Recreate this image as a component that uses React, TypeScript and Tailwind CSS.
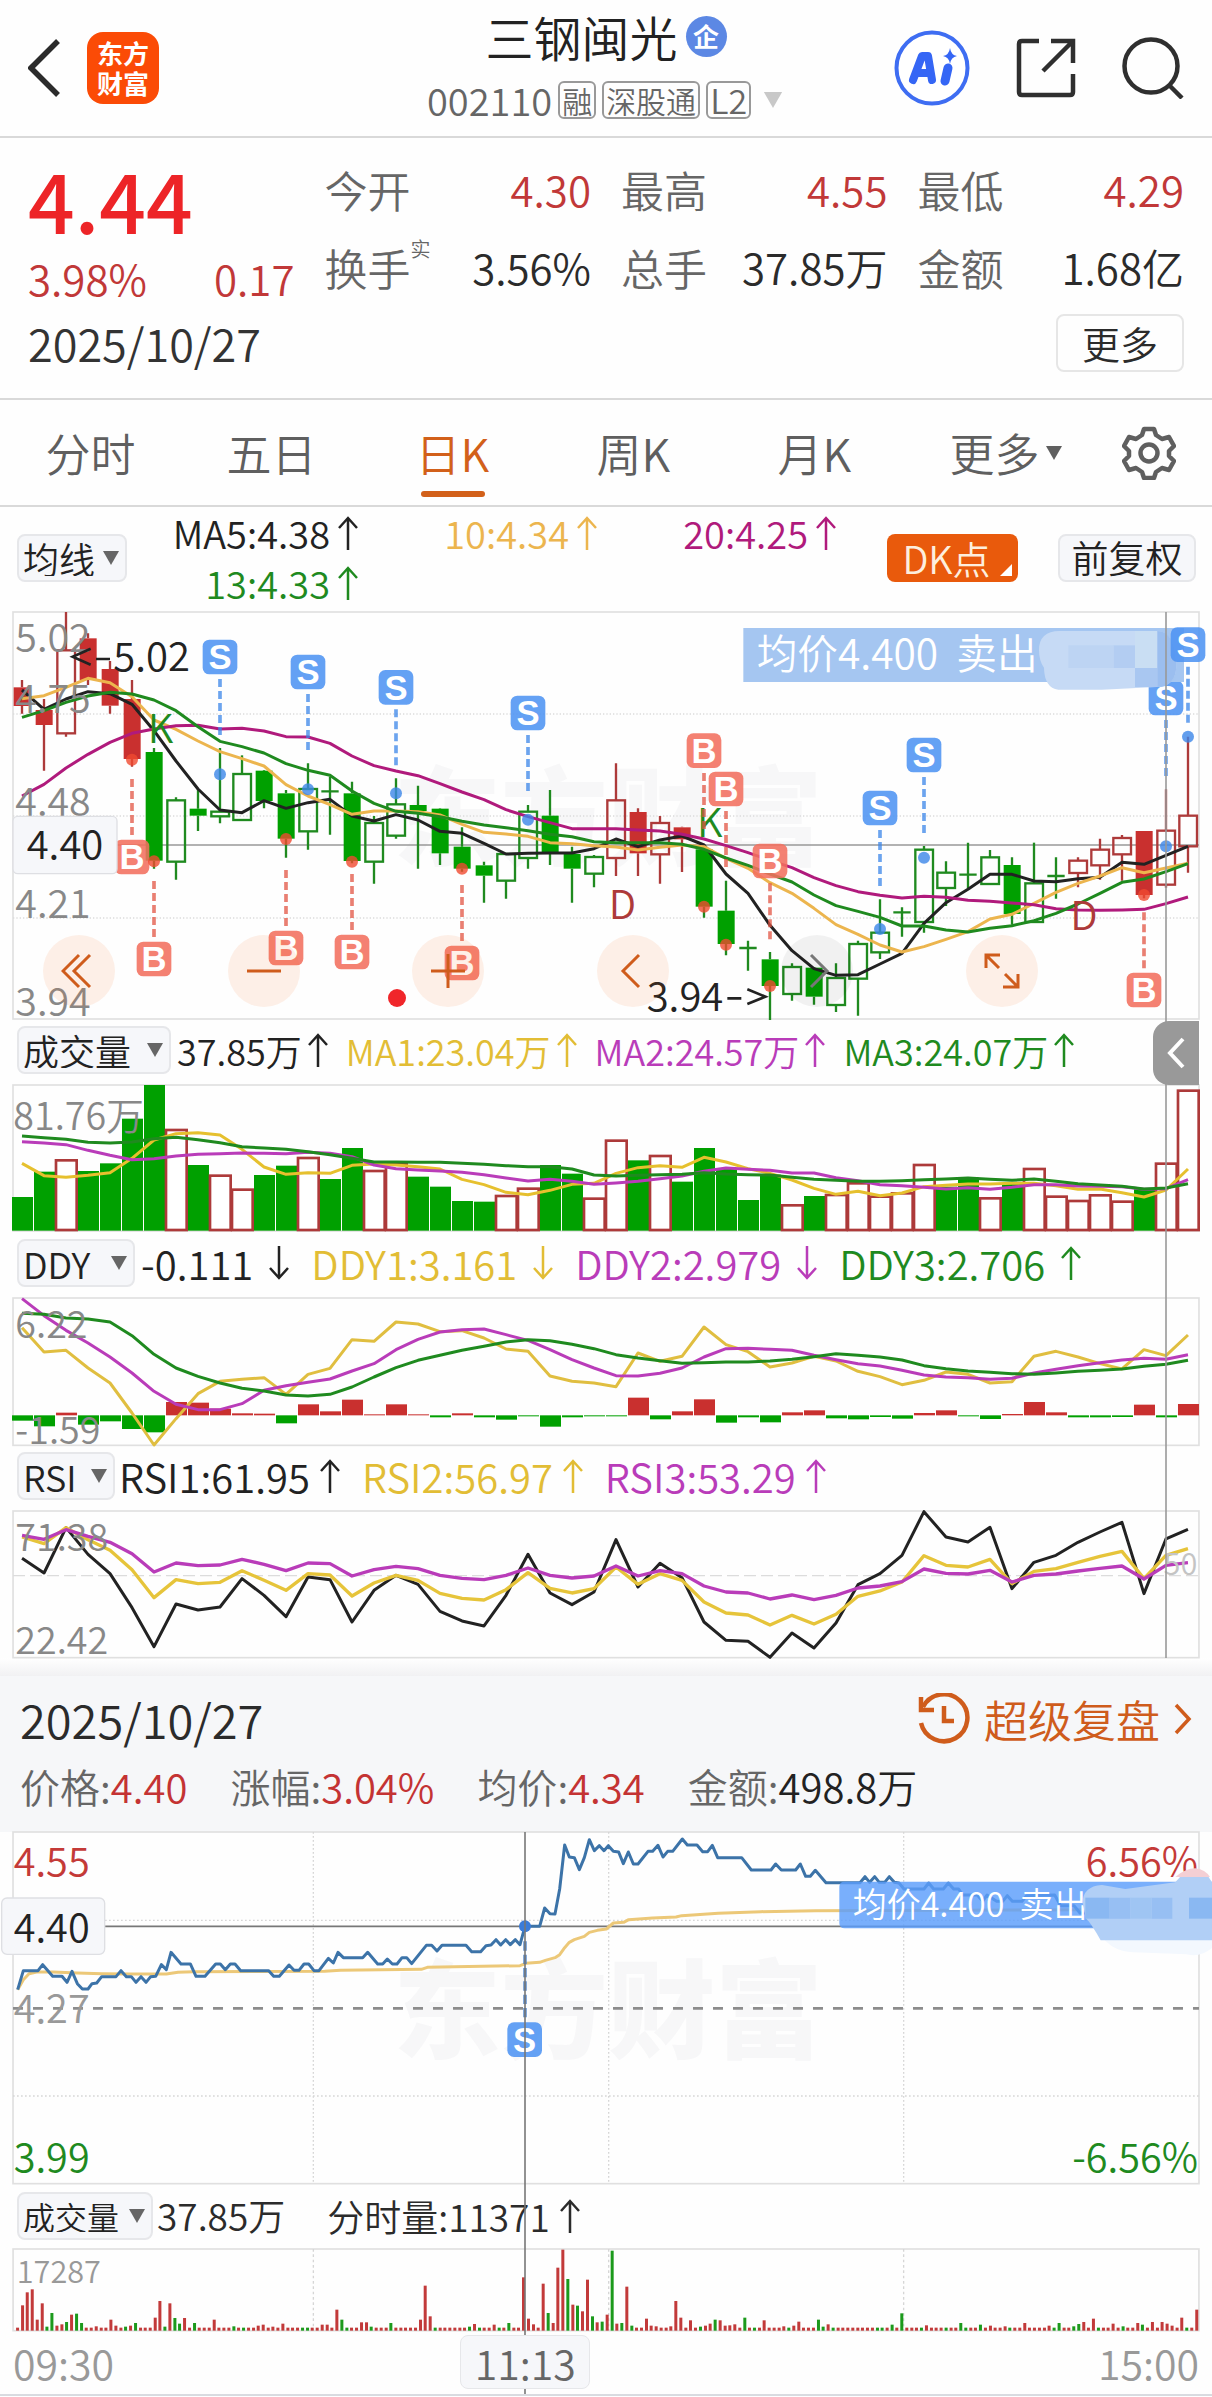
import React from "react";

const UP = "#c9302f";
const DOWN = "#00a000";
const UP_LINE = "#ad3a3a";
const DOWN_LINE = "#1f8a1f";

/* Chart drawings use three units per CSS pixel; one trading day is 66 units wide. */
const dayX = (i: number) => 66 * (i + 1);
const dayLine = (ys: number[]) => ys.map((y, i) => `${dayX(i)},${y}`).join(" ");

type Candle = [string, number, number, number, number];

/* kind (upper case: filled, lower case: hollow, x: cross), high, body top, body bottom, low */
const candles: Candle[] = [
  ["R", 240, 262, 318, 341], ["R", 297, 330, 375, 512], ["r", 36, 151, 400, 410], ["R", 100, 115, 240, 255],
  ["R", 183, 207, 317, 341], ["R", 240, 297, 477, 500], ["G", 444, 456, 782, 806], ["g", 592, 601, 785, 839],
  ["G", 568, 626, 647, 693], ["g", 444, 635, 649, 670], ["g", 466, 522, 660, 660], ["G", 510, 512, 603, 625],
  ["G", 570, 580, 716, 773], ["g", 490, 567, 694, 749], ["x", 530, 574, 574, 704], ["G", 545, 580, 783, 790],
  ["g", 648, 669, 785, 851], ["g", 535, 613, 707, 716], ["G", 557, 615, 633, 806], ["G", 625, 626, 760, 795],
  ["G", 682, 740, 806, 815], ["G", 785, 796, 827, 908], ["g", 760, 762, 842, 896], ["g", 615, 635, 774, 806],
  ["G", 570, 647, 760, 795], ["G", 740, 762, 806, 908], ["g", 765, 771, 821, 862], ["r", 490, 601, 774, 828],
  ["R", 625, 636, 760, 828], ["r", 648, 669, 763, 851], ["R", 680, 682, 718, 816], ["G", 740, 748, 920, 953],
  ["G", 842, 932, 1032, 1066], ["x", 1022, 1044, 1044, 1112], ["G", 1056, 1078, 1158, 1260], ["g", 1090, 1101, 1182, 1202],
  ["G", 1101, 1103, 1190, 1214], ["g", 1090, 1134, 1215, 1236], ["g", 1022, 1032, 1136, 1247], ["g", 898, 998, 1057, 1077],
  ["x", 922, 937, 937, 1010], ["g", 738, 749, 966, 998], ["g", 784, 818, 864, 918], ["x", 728, 824, 824, 866],
  ["g", 750, 772, 852, 852], ["G", 772, 795, 942, 974], ["g", 728, 850, 966, 966], ["x", 772, 828, 828, 896],
  ["r", 772, 782, 819, 862], ["r", 716, 749, 796, 839], ["r", 705, 714, 763, 842], ["R", 693, 693, 885, 895],
  ["r", 568, 692, 854, 863], ["r", 410, 647, 739, 818],
];

const ma5 = [270, 328, 297, 275, 281, 313, 392, 483, 567, 630, 638, 602, 625, 608, 598, 648, 663, 644, 660, 694, 700, 730, 762, 760, 759, 759, 746, 717, 740, 720, 708, 735, 822, 880, 976, 1052, 1106, 1126, 1124, 1092, 1060, 970, 908, 868, 823, 823, 843, 845, 836, 832, 787, 793, 766, 739];
const ma10 = [296, 287, 262, 235, 248, 290, 360, 388, 423, 455, 476, 498, 554, 588, 614, 643, 633, 633, 635, 645, 673, 697, 702, 709, 728, 731, 737, 741, 750, 742, 735, 740, 775, 805, 848, 880, 925, 974, 1003, 1035, 1056, 1040, 1018, 995, 957, 943, 910, 877, 850, 828, 803, 818, 804, 790];
const ma13 = [352, 332, 307, 288, 277, 282, 300, 332, 380, 424, 440, 459, 491, 511, 526, 573, 610, 634, 640, 650, 664, 675, 683, 692, 703, 710, 725, 728, 728, 728, 733, 748, 774, 796, 822, 846, 885, 917, 934, 952, 978, 978, 990, 996, 985, 977, 962, 940, 912, 880, 847, 837, 815, 791];
const ma20 = [588, 553, 504, 463, 427, 400, 387, 377, 376, 387, 385, 393, 410, 411, 430, 468, 497, 513, 527, 551, 576, 599, 629, 650, 668, 686, 686, 686, 690, 693, 703, 717, 737, 758, 781, 803, 833, 857, 875, 886, 894, 889, 892, 901, 904, 909, 914, 926, 930, 931, 930, 928, 911, 891];

type Mark = { side: "S" | "B"; x: number; y: number; dash: number; dot: number };
const marks: Mark[] = [
  { side: "S", x: 660, y: 171, dash: 237, dot: 523 },
  { side: "S", x: 924, y: 216, dash: 282, dot: 568 },
  { side: "S", x: 1188, y: 262, dash: 328, dot: 580 },
  { side: "S", x: 1584, y: 339, dash: 405, dot: 659 },
  { side: "S", x: 2640, y: 624, dash: 690, dot: 987 },
  { side: "S", x: 2772, y: 465, dash: 531, dot: 773 },
  { side: "S", x: 3498, y: 294, dash: 360, dot: 739 },
  { side: "B", x: 396, y: 771, dash: 537, dot: 479 },
  { side: "B", x: 462, y: 1077, dash: 843, dot: 784 },
  { side: "B", x: 858, y: 1044, dash: 810, dot: 717 },
  { side: "B", x: 1056, y: 1056, dash: 822, dot: 785 },
  { side: "B", x: 1386, y: 1089, dash: 855, dot: 806 },
  { side: "B", x: 2112, y: 452, dash: 519, dot: 920 },
  { side: "B", x: 2178, y: 567, dash: 633, dot: 1034 },
  { side: "B", x: 2310, y: 783, dash: 850, dot: 1158 },
  { side: "B", x: 3432, y: 1170, dash: 937, dot: 885 },
];
const lastMark: Mark = { side: "S", x: 3564, y: 134, dash: 200, dot: 410 };

const volumes = "G531 G455 r421 G453 G430 G296 G195 r330 G435 r467 r509 G465 G437 r414 G477 G384 r453 r432 G470 G500 G543 G545 r528 r506 G435 G461 r536 r362 G421 r408 G485 G384 G445 G540 G464 r556 G528 r525 r490 r530 r520 r435 G500 G473 r535 G490 r447 r530 r543 r526 r545 G508 r431 r212"
  .split(" ")
  .map((s) => ({ kind: s[0], y: Number(s.slice(1)) }));
const vol1 = [430, 467, 472, 466, 458, 415, 360, 341, 338, 345, 388, 441, 463, 458, 460, 436, 432, 435, 440, 447, 478, 494, 517, 524, 511, 493, 490, 460, 443, 437, 442, 412, 426, 446, 460, 480, 505, 523, 514, 527, 519, 500, 496, 492, 492, 490, 490, 497, 508, 507, 518, 531, 510, 447];
const vol2 = [365, 369, 374, 391, 406, 419, 416, 408, 403, 401, 399, 400, 401, 397, 400, 410, 435, 446, 450, 453, 457, 464, 474, 483, 478, 484, 493, 489, 484, 476, 468, 454, 444, 448, 451, 459, 459, 473, 482, 494, 497, 502, 507, 503, 508, 502, 494, 494, 498, 499, 500, 508, 506, 479];
const vol3 = [348, 353, 358, 367, 369, 366, 356, 352, 359, 368, 380, 384, 388, 395, 404, 415, 426, 426, 427, 427, 430, 433, 437, 440, 440, 447, 465, 468, 466, 464, 463, 458, 462, 464, 465, 472, 478, 481, 484, 484, 482, 479, 477, 474, 478, 481, 477, 484, 491, 495, 499, 507, 504, 491];

const ddyBars = [1201, 1218, 1177, 1213, 1203, 1226, 1236, 1145, 1147, 1165, 1179, 1180, 1209, 1152, 1173, 1138, 1182, 1152, 1182, 1191, 1179, 1191, 1198, 1188, 1219, 1191, 1188, 1188, 1132, 1197, 1173, 1137, 1207, 1191, 1206, 1176, 1170, 1194, 1197, 1190, 1195, 1178, 1170, 1188, 1196, 1181, 1145, 1176, 1191, 1191, 1190, 1153, 1191, 1151];
const ddy1 = [922, 995, 990, 1043, 1088, 1178, 1274, 1195, 1120, 1083, 1077, 1072, 1122, 1062, 1044, 958, 963, 905, 911, 934, 931, 953, 986, 993, 1067, 1083, 1088, 1099, 998, 1023, 1008, 920, 973, 994, 1040, 1028, 1008, 1022, 1053, 1069, 1093, 1080, 1055, 1062, 1088, 1084, 1008, 993, 1010, 1030, 1046, 988, 1006, 944];
const ddy2 = [835, 886, 930, 968, 1010, 1058, 1113, 1152, 1168, 1168, 1150, 1110, 1096, 1086, 1076, 1052, 1030, 988, 957, 935, 928, 926, 943, 960, 988, 1018, 1043, 1066, 1067, 1059, 1043, 1010, 985, 984, 987, 990, 1005, 1018, 1030, 1037, 1050, 1064, 1070, 1072, 1077, 1074, 1058, 1047, 1036, 1027, 1019, 1014, 1017, 1003];
const ddy3 = [879, 882, 893, 896, 905, 946, 1002, 1043, 1068, 1088, 1104, 1112, 1124, 1127, 1122, 1100, 1070, 1042, 1020, 1005, 990, 978, 965, 958, 961, 972, 985, 1003, 1013, 1021, 1029, 1027, 1025, 1025, 1022, 1017, 1009, 1000, 1005, 1010, 1019, 1036, 1045, 1052, 1056, 1060, 1062, 1058, 1053, 1050, 1046, 1038, 1032, 1020];

const rsi1 = [354, 398, 262, 342, 400, 502, 619, 491, 509, 500, 415, 465, 529, 410, 418, 545, 450, 405, 432, 513, 542, 557, 465, 342, 458, 493, 455, 298, 440, 369, 412, 545, 600, 603, 651, 578, 623, 548, 433, 400, 345, 214, 290, 305, 261, 445, 366, 345, 306, 275, 246, 460, 296, 267];
const rsi2 = [290, 310, 262, 298, 330, 388, 472, 418, 430, 426, 391, 420, 450, 400, 404, 467, 428, 405, 420, 459, 474, 479, 448, 397, 444, 458, 445, 380, 432, 400, 420, 485, 518, 524, 554, 525, 551, 522, 468, 452, 425, 346, 375, 380, 357, 430, 393, 385, 366, 348, 333, 415, 345, 325];
const rsi3 = [285, 297, 268, 288, 306, 340, 395, 368, 376, 374, 357, 372, 391, 368, 370, 407, 388, 378, 385, 405, 414, 418, 405, 383, 405, 413, 407, 377, 407, 391, 400, 437, 455, 458, 476, 464, 478, 465, 443, 437, 424, 386, 399, 401, 390, 425, 405, 401, 392, 384, 377, 416, 375, 367];

/* Intraday samples: x runs over 3130 steps for the whole session width. */
const INTRADAY_X = 1.16;
const intraday = (s: string) =>
  s
    .split(" ")
    .map((p) => {
      const [x, y] = p.split(",").map(Number);
      return `${Math.round(x * INTRADAY_X)},${y}`;
    })
    .join(" ");

const price = intraday(
  "46,510 60,453 98,453 110,435 136,470 160,470 173,488 186,455 200,492 213,508 228,508 238,492 250,490 263,471 300,471 313,453 327,471 340,471 352,488 365,471 378,488 390,471 403,470 417,435 430,450 442,398 468,433 492,433 507,470 530,470 558,433 570,433 583,450 596,433 608,433 622,453 695,453 708,470 722,470 747,436 760,452 773,452 786,433 798,433 812,453 825,453 849,416 862,430 874,398 888,414 938,414 951,398 977,433 990,433 1002,418 1015,433 1027,433 1040,414 1052,414 1065,432 1103,377 1116,377 1130,394 1143,377 1205,377 1220,396 1243,396 1257,378 1270,376 1283,360 1295,376 1308,360 1320,375 1333,360 1345,375 1358,320 1396,320 1409,265 1422,282 1435,283 1447,208 1460,76 1472,112 1485,114 1498,150 1511,114 1524,60 1537,93 1550,78 1562,93 1573,78 1586,95 1600,97 1612,132 1625,97 1638,133 1650,133 1676,95 1688,95 1702,77 1715,112 1727,95 1740,95 1765,58 1778,76 1803,76 1817,96 1830,96 1842,77 1856,114 1918,114 1943,151 1994,151 2006,133 2021,151 2058,151 2070,133 2084,170 2096,170 2109,152 2136,189 2224,189 2237,171 2249,188 2262,171 2274,188 2288,188 2300,171 2313,188 2325,190 2338,208 2390,208 2402,190 2415,208 2440,208 2453,190 2466,208 2479,208 2490,226 2528,226 2541,245 2553,226 2578,245 2593,245 2605,228 2618,245 2643,245 2655,228 2728,226 2743,258 2778,258 2793,280 2830,280",
);
const average = intraday(
  "46,510 60,480 75,462 95,457 136,457 200,460 263,462 340,463 430,463 460,458 500,456 840,455 880,452 1090,449 1105,443 1345,438 1360,431 1396,428 1410,422 1435,414 1447,405 1460,384 1472,368 1485,360 1511,350 1524,338 1545,332 1568,328 1586,310 1613,308 1626,300 1688,295 1748,292 1763,288 1858,281 1968,276 2108,273 2830,270",
);

/* Minute volume peaks as position, top edge and direction; all other minutes are minimal. */
const peaks =
  "29:377r 36:338r 42:329r 48:420r 55:371r 61:441g 68:400g 74:438r 80:434r 87:427g 93:405r 99:402g 106:430g 125:440r 144:420r 150:438r 163:441g 170:438r 176:430g 200:414r 208:364r 214:441g 221:371r 227:415g 233:432g 240:415r 252:430g 278:420r 303:440g 335:438r 341:435r 354:441r 367:432r 418:435r 424:435r 437:390r 443:420g 469:428r 475:428r 482:441g 507:430g 545:420r 551:318r 558:410r 609:441g 615:433r 641:435r 659:430g 679:293r 685:417r 692:434r 704:312r 711:400g 717:430r 724:264r 730:210r 736:298g 742:375r 749:378g 755:395r 762:300r 768:410g 774:428r 781:426g 787:405r 794:213g 800:432r 806:430g 812:321r 819:438g 838:417r 845:438r 851:440r 870:440r 876:364r 883:414r 895:422r 908:441g 914:438r 921:432r 927:420g 933:422r 940:438r 946:437r 953:434r 965:414g 991:422r 1016:440r 1029:438r 1036:426r 1061:420g 1067:441g 1073:434r 1156:435g 1169:401g 1201:437r 1245:430g 1271:435g 1284:438r 1303:440r 1328:430r 1360:438r 1373:430g 1391:440g 1398:433g 1405:427r 1417:417r 1443:432r 1455:440g 1475:430r 1481:435g 1494:427r 1507:427r 1513:432r 1519:438r 1532:414r 1550:390r";
const minutes = Array.from({ length: 241 }, (_, i) => ({ y: 444, up: i % 9 !== 4 && i % 13 !== 7 }));
peaks.split(" ").forEach((p) => {
  const [x, rest] = p.split(":");
  minutes[Math.round((Number(x) - 23) / 6.3625)] = { y: parseInt(rest, 10), up: rest.endsWith("r") };
});

function Arrow({ down = false }: { down?: boolean }) {
  return (
    <svg viewBox="0 0 20 34" className="h-[34px] w-5 shrink-0" fill="none" stroke="currentColor" strokeWidth="2.5" aria-hidden="true">
      {down ? <path d="M10 0V32M1 22l9 10 9-10" /> : <path d="M10 34V2M1 12l9-10 9 10" />}
    </svg>
  );
}

function Caret({ className }: { className: string }) {
  return (
    <svg viewBox="0 0 16 14" className={className} fill="currentColor" aria-hidden="true">
      <path d="M0 0h16L8 14z" />
    </svg>
  );
}

function Picker({ label, value, box }: { label: string; value: string; box: string }) {
  return (
    <span className={`relative flex h-12 shrink-0 text-[#222] ${box}`}>
      <select aria-label={label} defaultValue={value} className="w-full appearance-none rounded-lg border-2 border-[#e6e7ea] bg-[#f6f7fa] pl-1 leading-none outline-none">
        <option>{value}</option>
      </select>
      <Caret className="pointer-events-none absolute top-[17px] right-2 h-3.5 w-4 text-[#666]" />
    </span>
  );
}

function Reading({ style, text, down }: { style: string; text: string; down?: boolean }) {
  return (
    <span className={`flex items-center leading-[50px] whitespace-nowrap ${style}`}>
      {text}
      <Arrow down={down} />
    </span>
  );
}

function Frame({ y, h, label, children }: { y: number; h: number; label: string; children: React.ReactNode }) {
  return (
    <svg viewBox={`39 ${y} 3558 ${h}`} className="block h-auto w-full overflow-visible" role="img" aria-label={label}>
      <rect x="39" y={y} width="3558" height={h} fill="none" stroke="#e0e0e0" strokeWidth="5" />
      {children}
    </svg>
  );
}

function Line({ points, color, width = 9 }: { points: string; color: string; width?: number }) {
  return <polyline points={points} fill="none" stroke={color} strokeWidth={width} strokeLinejoin="round" />;
}

function Tag({ side, x, y }: { side: string; x: number; y: number }) {
  return (
    <g>
      <rect x={x - 52} y={y - 52} width="104" height="104" rx="20" fill={side === "S" ? "#4f94f3" : "#f2705f"} fillOpacity="0.88" />
      <text x={x} y={y + 37} textAnchor="middle" fontSize="104" fontWeight="700" fill="#fff" fontFamily="Liberation Sans, sans-serif">
        {side}
      </text>
    </g>
  );
}

function TradeMark({ side, x, y, dash, dot }: Mark) {
  const color = side === "S" ? "#3b86e8" : "#e25443";
  return (
    <g>
      <path d={`M${x} ${dash}v168`} stroke={color} strokeOpacity="0.75" strokeWidth="11" strokeDasharray="24 12" />
      <circle cx={x} cy={dot} r="18" fill={side === "S" ? "#3b86e8" : "#f04a2f"} fillOpacity="0.8" />
      <Tag side={side} x={x} y={y} />
    </g>
  );
}

function Watermark({ y }: { y: number }) {
  return (
    <text x="1180" y={y} fontSize="322" fontWeight="900" fill="#f7f7f8">
      东方财富
    </text>
  );
}

function CandleChart() {
  return (
    <Frame y={36} h={1221} label="日K线图">
      <Watermark y={772} />
      <path d="M39 342H3597M39 648H3597M39 954H3597" stroke="#dcdcdc" strokeWidth="4" strokeDasharray="4 6" />
      <path d="M39 735H3597" stroke="#999" strokeWidth="5" />
      {candles.map(([kind, high, top, bottom, low], i) => {
        const x = dayX(i);
        const up = kind === "R" || kind === "r";
        const stroke = up ? UP_LINE : DOWN_LINE;
        if (kind === "x") return <path key={i} d={`M${x} ${high}V${low}M${x - 26} ${top}h52`} stroke={stroke} strokeWidth="7" />;
        const filled = kind === "R" || kind === "G";
        return (
          <g key={i} stroke={stroke} strokeWidth="7">
            <path d={`M${x} ${high}V${top}M${x} ${bottom}V${low}`} />
            {filled ? (
              <rect x={x - 25} y={top} width="51" height={bottom - top} fill={up ? UP : DOWN} stroke="none" />
            ) : (
              <rect x={x - 26} y={top} width="53" height={bottom - top} fill="none" />
            )}
          </g>
        );
      })}
      <Line points={dayLine(ma5)} color="#222" />
      <Line points={dayLine(ma10)} color="#ecb54e" />
      <Line points={dayLine(ma20)} color="#b01a7c" />
      <Line points={dayLine(ma13)} color="#1f8a1f" />
      <g fontSize="120">
        <text x="443" y="428" fill="#1f8a1f">K</text>
        <text x="2091" y="710" fill="#1f8a1f">K</text>
        <text x="1826" y="957" fill="#ad3a3a">D</text>
        <text x="3211" y="990" fill="#ad3a3a">D</text>
      </g>
      {marks.map((m) => (
        <TradeMark key={`${m.x}-${m.y}`} {...m} />
      ))}
      <g fontSize="118" fill="#888">
        <text x="46" y="155">5.02</text>
        <text x="46" y="340">4.75</text>
        <text x="46" y="647">4.48</text>
        <text x="46" y="953">4.21</text>
        <text x="46" y="1248">3.94</text>
      </g>
      <rect x="39" y="649" width="312" height="172" rx="14" fill="#f6f7fa" stroke="#dedfe3" strokeWidth="4" />
      <g fontSize="120" fill="#222">
        <text x="80" y="776">4.40</text>
        <text x="340" y="212">5.02</text>
        <text x="1940" y="1232">3.94</text>
      </g>
      <path d="M272 146l-54 24 54 24M288 177h42M2182 1195h42M2242 1168l54 22-54 22" fill="none" stroke="#222" strokeWidth="8" />
      <circle cx="1191" cy="1194" r="27" fill="#f0262a" />
      <rect x="2230" y="84" width="1322" height="162" fill="#a5c6f1" />
      <text x="2270" y="206" fontSize="122" fill="#fff" xmlSpace="preserve">均价4.400  卖出</text>
      <path d="M3117 150q0-56 62-57h292q55 0 58 108-4 60-60 60l-164 8h-130q-42-6-43-66-15-20-15-53z" fill="#c6daf5" />
      <path d="M3205 136h136v68h-136z" fill="#bdd4f3" />
      <path d="M3341 136h64v68h-64z" fill="#b3cdf2" />
      <path d="M3405 93h67v111h-67z" fill="#c9def3" />
      <path d="M3405 204h67v57h-67z" fill="#a9c7f1" />
      <path d="M3472 93q55 0 57 108-4 60-57 60z" fill="#9bbeef" />
      <TradeMark {...lastMark} />
    </Frame>
  );
}

function VolumeChart() {
  return (
    <Frame y={195} h={438} label="成交量">
      {volumes.map(({ kind, y }, i) =>
        kind === "G" ? (
          <rect key={i} x={dayX(i) - 30} y={y} width="63" height={632 - y} fill={DOWN} />
        ) : (
          <rect key={i} x={dayX(i) - 30} y={y} width="62" height={630 - y} fill="#fff" stroke="#ad3a3a" strokeWidth="8" />
        ),
      )}
      <Line points={dayLine(vol1)} color="#e6c02e" />
      <Line points={dayLine(vol2)} color="#b93cb9" />
      <Line points={dayLine(vol3)} color="#1f8a1f" />
      <text x="40" y="330" fontSize="113" fill="#888">81.76万</text>
    </Frame>
  );
}

function DdyChart() {
  return (
    <Frame y={833} h={442} label="DDY">
      {ddyBars.map((y, i) => (
        <rect key={i} x={dayX(i) - 30} y={Math.min(y, 1185)} width="63" height={Math.abs(1185 - y)} fill={y < 1185 ? UP : DOWN} />
      ))}
      <Line points={dayLine(ddy1)} color="#e0be40" />
      <Line points={dayLine(ddy2)} color="#b93cb9" />
      <Line points={dayLine(ddy3)} color="#1f8a1f" />
      <text x="46" y="953" fontSize="113" fill="#888">6.22</text>
      <text x="46" y="1270" fontSize="113" fill="#888">-1.59</text>
    </Frame>
  );
}

function RsiChart() {
  return (
    <Frame y={212} h={440} label="RSI">
      <path d="M39 406H3597" stroke="#dcdcdc" strokeWidth="4" strokeDasharray="36 15" />
      <Line points={dayLine(rsi1)} color="#222" />
      <Line points={dayLine(rsi2)} color="#e6c43a" width={10} />
      <Line points={dayLine(rsi3)} color="#b93cb9" width={10} />
      <g fontSize="113" fill="#888">
        <text x="46" y="332">71.38</text>
        <text x="46" y="641">22.42</text>
      </g>
      <text x="3592" y="403" fontSize="92" fill="#c4c4c4" textAnchor="end">50</text>
    </Frame>
  );
}

function IntradayChart() {
  return (
    <Frame y={37} h={1055} label="分时走势">
      <Watermark y={692} />
      <path d="M39 302H3597M39 829H3597M940 37V1092M1826 37V1092M2711 37V1092" stroke="#d6d6d6" strokeWidth="4" strokeDasharray="5 7" />
      <path d="M39 566H3597" stroke="#8c8c8c" strokeWidth="8" strokeDasharray="30 30" />
      <path d="M39 320H3597" stroke="#777" strokeWidth="5" />
      <Line points={average} color="#ecc878" />
      <Line points={price} color="#3c73a8" />
      <path d="M1575 365V600" stroke="#4a80c8" strokeWidth="10" strokeDasharray="28 12" />
      <circle cx="1575" cy="320" r="18" fill="#3b7cd8" />
      <Tag side="S" x={1574} y={660} />
      <g fontSize="119">
        <text x="41" y="168" fill="#c43a38">4.55</text>
        <text x="41" y="611" fill="#999">4.27</text>
        <text x="41" y="1057" fill="#1f8a1f">3.99</text>
        <text x="3594" y="168" fill="#c43a38" textAnchor="end">6.56%</text>
        <text x="3594" y="1057" fill="#1f8a1f" textAnchor="end">-6.56%</text>
      </g>
      <rect x="5" y="235" width="309" height="169" rx="16" fill="#f6f7fa" stroke="#dedfe3" strokeWidth="4" />
      <text x="41" y="368" fontSize="119" fill="#222">4.40</text>
      <path d="M2534 186H3636V326H2534q-16 0-16-16V202q0-16 16-16z" fill="#5b9dfb" fillOpacity="0.82" />
      <text x="2558" y="293" fontSize="102" fill="#fff" xmlSpace="preserve">均价4.400  卖出</text>
      <path d="M3300 340L3608 340 3636 330V385Q3600 415 3560 404L3400 398Q3330 395 3300 340z" fill="#f3f8fe" />
      <path d="M3248 250q0-50 58-54l70 12 150-20q30-40 60-40 30 0 50 40V362H3302q-28-50-44-66z" fill="#b1cff6" />
      <path d="M3256 234h73v63h-73z" fill="#8ab8f2" />
      <path d="M3329 234h62v63h-62zM3455 234h62v63h-62z" fill="#97bff3" />
      <path d="M3391 234h64v63h-64z" fill="#9fc5f3" />
      <path d="M3567 234h69v63h-69z" fill="#8ab8f2" />
      <path d="M3526 172q30-26 60-26 30 4 44 26z" fill="#f4cfd4" />
    </Frame>
  );
}

function MinuteVolumeChart() {
  return (
    <Frame y={208} h={245} label="分时成交量">
      <path d="M940 208V453M1826 208V453M2711 208V453" stroke="#d6d6d6" strokeWidth="4" strokeDasharray="8 8" />
      <text x="50" y="310" fontSize="92" fill="#999">17287</text>
      {minutes.map(({ y, up }, i) => (
        <rect key={i} x={Math.round(48 + i * 14.74)} y={y} width="9" height={453 - y} fill={up ? "#c23a3a" : "#1c9a1c"} />
      ))}
    </Frame>
  );
}

function ChartControls() {
  const round = "flex size-[72px] items-center justify-center rounded-full";
  const icon = "size-9";
  const orange = `${round} bg-[#f26a1b]/10 text-[#cf5c1c]`;
  const pen = { fill: "none", stroke: "currentColor", strokeWidth: 3 };
  return (
    <div className="absolute right-[161px] bottom-3 left-[30px] flex justify-between">
      <button type="button" aria-label="快退" className={orange}>
        <svg viewBox="0 0 36 36" className={icon} {...pen}><path d="M18 2L2 18l16 16M29 2L13 18l16 16" /></svg>
      </button>
      <button type="button" aria-label="缩小" className={orange}>
        <svg viewBox="0 0 36 36" className={icon} {...pen}><path d="M1 18h34" /></svg>
      </button>
      <button type="button" aria-label="放大" className={orange}>
        <svg viewBox="0 0 36 36" className={icon} {...pen}><path d="M1 18h34M18 1v34" /></svg>
      </button>
      <button type="button" aria-label="前一日" className={orange}>
        <svg viewBox="0 0 36 36" className={icon} {...pen}><path d="M24 2L8 18l16 16" /></svg>
      </button>
      <button type="button" aria-label="后一日" className={`${round} bg-black/5 text-[#777]`}>
        <svg viewBox="0 0 36 36" className={icon} {...pen}><path d="M12 2l16 16-16 16" /></svg>
      </button>
      <button type="button" aria-label="全屏" className={orange}>
        <svg viewBox="0 0 36 36" className={icon} {...pen}><path d="M2 15V2h14M2 2l13 13M34 21v13H19M34 34L21 21" /></svg>
      </button>
    </div>
  );
}

function Header() {
  const badge = "flex h-[38px] items-center rounded-md border-2 border-[#999] px-0.5";
  return (
    <header className="grid h-[138px] grid-cols-[1fr_auto_1fr] items-center border-b-2 border-[#d9d9d9] pr-7 pl-7">
      <div className="flex items-center gap-[27px]">
        <button type="button" aria-label="返回">
          <svg viewBox="0 0 32 58" className="h-[58px] w-8" fill="none" stroke="#2b2b2b" strokeWidth="5.5"><path d="M30 2L3 29l27 27" /></svg>
        </button>
        <a href="#home" className="flex size-[72px] flex-col items-center justify-center rounded-2xl bg-[#fb4b06] text-[26px] leading-[30px] font-bold text-white">
          <span>东方</span>
          <span>财富</span>
        </a>
      </div>
      <div className="flex flex-col items-center">
        <h1 className="flex items-center gap-2 text-5xl leading-[64px] text-[#222]">
          三钢闽光
          <span className="flex size-[41px] items-center justify-center rounded-full bg-[#5c88e4] text-[26px] leading-none font-bold text-white">企</span>
        </h1>
        <div className="flex items-center gap-1.5 text-[38px] leading-[64px] text-[#666]">
          <span>002110</span>
          <span className={`${badge} text-[30px]`}>融</span>
          <span className={`${badge} text-[30px]`}>深股通</span>
          <span className={`${badge} text-[34px]`}>L2</span>
          <Caret className="ml-1 h-4 w-6 text-[#c8c8c8]" />
        </div>
      </div>
      <div className="flex items-center justify-end gap-[46px]">
        <button type="button" aria-label="AI">
          <svg viewBox="0 0 76 76" className="size-[76px]">
            <circle cx="38" cy="38" r="35.5" fill="#fff" stroke="#3e6df2" strokeWidth="4" />
            <g fill="none" stroke="#3566f5" strokeLinecap="round" strokeLinejoin="round">
              <path d="M19 50L28 26h6l4 24M24 43h12" strokeWidth="8" />
              <path d="M54 38l-3 13" strokeWidth="9" />
            </g>
            <path d="M56 18q1 7 7 8-6 1-7 8-1-7-7-8 6-1 7-8z" fill="#3566f5" />
          </svg>
        </button>
        <button type="button" aria-label="分享">
          <svg viewBox="0 0 60 60" className="size-[60px]" fill="none" stroke="#2f2f2f" strokeWidth="4.5">
            <path d="M23 3H6q-3 0-3 3v48q0 3 3 3h48q3 0 3-3V36" />
            <path d="M35 3h22v22M57 3L27 33" />
          </svg>
        </button>
        <button type="button" aria-label="搜索">
          <svg viewBox="0 0 62 62" className="size-[62px]" fill="none" stroke="#2f2f2f" strokeWidth="4.5">
            <circle cx="29" cy="29" r="26.5" />
            <path d="M47 48l13 13" />
          </svg>
        </button>
      </div>
    </header>
  );
}

function Stat({ label, note, value, up }: { label: string; note?: string; value: string; up?: boolean }) {
  return (
    <div className="flex h-[78px] items-center justify-between leading-[78px] whitespace-nowrap">
      <dt className="flex text-[43px] text-[#666]">
        {label}
        {note && <span className="h-10 text-xl leading-[42px]">{note}</span>}
      </dt>
      <dd className={up ? "text-[#c13838]" : "text-[#2b2b2b]"}>{value}</dd>
    </div>
  );
}

function Quote() {
  return (
    <section className="border-b-2 border-[#d9d9d9] px-7 pt-3 pb-[26px]">
      <div className="grid grid-cols-4 gap-x-[30px]">
        <div>
          <p className="text-[82px] leading-[98px] font-medium text-[#ed2427]">4.44</p>
          <p className="flex justify-between text-[42px] leading-[60px] text-[#c13838]">
            <span>3.98%</span>
            <span>0.17</span>
          </p>
        </div>
        <dl className="col-span-3 grid grid-cols-3 content-start gap-x-[30px] text-[42px]">
          <Stat label="今开" value="4.30" up />
          <Stat label="最高" value="4.55" up />
          <Stat label="最低" value="4.29" up />
          <Stat label="换手" note="实" value="3.56%" />
          <Stat label="总手" value="37.85万" />
          <Stat label="金额" value="1.68亿" />
        </dl>
      </div>
      <div className="flex items-center justify-between pt-1.5">
        <time className="text-[45px] leading-[56px] text-[#333]">2025/10/27</time>
        <button type="button" className="h-[58px] w-32 rounded-lg border-2 border-[#e6e6e6] text-[38px] leading-none text-[#2b2b2b]">更多</button>
      </div>
    </section>
  );
}

function Tabs() {
  const tab = "relative flex flex-1 items-center justify-center";
  return (
    <nav className="flex h-[107px] border-b-2 border-[#d9d9d9] text-[45px] text-[#5f5f5f]">
      <button type="button" className={tab}>分时</button>
      <button type="button" className={tab}>五日</button>
      <button type="button" className={`${tab} text-[#d2601a]`} aria-current="page">
        日K
        <span className="absolute bottom-2 h-1.5 w-16 rounded-full bg-[#d2601a]" />
      </button>
      <button type="button" className={tab}>周K</button>
      <button type="button" className={tab}>月K</button>
      <button type="button" className={tab}>
        <span className="flex items-center gap-1.5 pl-5">
          更多
          <Caret className="h-3.5 w-4" />
        </span>
      </button>
      <button type="button" aria-label="设置" className="flex w-[126px] items-center justify-center">
        <svg viewBox="0 0 54 54" className="size-[54px]" fill="none" stroke="#5f5f5f" strokeWidth="4.5" strokeLinejoin="round">
          <path d="M22 3h10l2 6 6 4 7-2 5 9-5 5v5l5 5-5 9-7-2-6 4-2 6H22l-2-6-6-4-7 2-5-9 5-5v-5l-5-5 5-9 7 2 6-4z" />
          <circle cx="27" cy="27" r="8.5" />
        </svg>
      </button>
    </nav>
  );
}

function Averages() {
  return (
    <div className="flex h-[105px] items-center pr-4 pb-1 pl-[17px]">
      <Picker label="均线" value="均线" box="w-[110px] text-4xl" />
      <div className="-ml-2 grid h-full flex-1 grid-cols-3 content-center justify-items-end text-[38px]">
        <Reading style="gap-2 text-[#222]" text="MA5:4.38" />
        <Reading style="gap-2 text-[#ecb54e]" text="10:4.34" />
        <Reading style="gap-2 text-[#b01a7c]" text="20:4.25" />
        <Reading style="gap-2 text-[#1f8a1f]" text="13:4.33" />
      </div>
      <button type="button" className="relative ml-[51px] h-12 w-[131px] rounded-lg bg-[#e95a0c] pr-3 text-[38px] leading-none text-[#fdeedd]">
        DK点
        <svg viewBox="0 0 12 12" className="absolute right-1.5 bottom-1.5 size-3" fill="#fff" aria-hidden="true"><path d="M12 0v12H0z" /></svg>
      </button>
      <button type="button" className="ml-10 h-12 w-[138px] rounded-lg border-2 border-[#e6e7ea] bg-[#f6f7fa] text-[37px] leading-none text-[#222]">前复权</button>
    </div>
  );
}

function DayCharts() {
  const row = "flex items-center pl-1 whitespace-nowrap";
  return (
    <section className="relative mx-[13px]">
      <div className="relative">
        <CandleChart />
        <ChartControls />
      </div>
      <div className={`relative h-[66px] ${row} gap-[18px] pb-1 text-4xl`}>
        <div className="flex items-center gap-1.5">
          <Picker label="指标一" value="成交量" box="w-[154px]" />
          <Reading style="gap-1.5 text-[#222]" text="37.85万" />
        </div>
        <Reading style="gap-1.5 text-[#e2bd35]" text="MA1:23.04万" />
        <Reading style="gap-1.5 text-[#b93cb9]" text="MA2:24.57万" />
        <Reading style="gap-1.5 text-[#1f8a1f]" text="MA3:24.07万" />
        <button type="button" aria-label="展开侧栏" className="absolute top-0.5 right-0 flex h-16 w-[46px] items-center justify-center rounded-l-2xl bg-[#999]">
          <svg viewBox="0 0 18 32" className="h-8 w-[18px]" fill="none" stroke="#fff" strokeWidth="4"><path d="M16 2L3 16l13 14" /></svg>
        </button>
      </div>
      <VolumeChart />
      <div className={`h-[67px] ${row} gap-[22px] pb-1 text-[40px]`}>
        <div className="flex items-center gap-1.5">
          <Picker label="指标二" value="DDY" box="w-[118px] text-4xl" />
          <Reading style="gap-4 text-[#222]" text="-0.111" down />
        </div>
        <Reading style="gap-4 text-[#e2bd35]" text="DDY1:3.161" down />
        <Reading style="gap-4 text-[#b93cb9]" text="DDY2:2.979" down />
        <Reading style="gap-4 text-[#1f8a1f]" text="DDY3:2.706" />
      </div>
      <DdyChart />
      <div className={`h-[66px] ${row} gap-[22px] pb-1 text-[40px]`}>
        <div className="flex items-center gap-1">
          <Picker label="指标三" value="RSI" box="w-[98px] text-4xl" />
          <Reading style="gap-2.5 text-[#222]" text="RSI1:61.95" />
        </div>
        <Reading style="gap-2.5 text-[#e2bd35]" text="RSI2:56.97" />
        <Reading style="gap-2.5 text-[#b93cb9]" text="RSI3:53.29" />
      </div>
      <RsiChart />
      <div className="pointer-events-none absolute inset-y-0 left-[97.1%] w-0.5 bg-[#999]/80" />
    </section>
  );
}

function Fact({ label, value, up }: { label: string; value: string; up?: boolean }) {
  return (
    <div className="flex">
      <dt className="text-[#666]">{label}:</dt>
      <dd className={up ? "text-[#c43333]" : "text-[#222]"}>{value}</dd>
    </div>
  );
}

function Intraday() {
  return (
    <section>
      <div className="h-[18px] bg-linear-to-b from-white to-[#f1f1f3]" />
      <div className="bg-[#f6f7f9] px-5 pt-3 pb-2.5">
        <div className="flex items-center justify-between">
          <time className="text-[47px] leading-[62px] text-[#2b2b2b]">2025/10/27</time>
          <a href="#replay" className="flex items-center gap-3.5 text-[44px] leading-[62px] text-[#cf5c1c]">
            <svg viewBox="0 0 52 52" className="size-[52px]" fill="none" stroke="currentColor" strokeWidth="4.5" aria-hidden="true">
              <path d="M5 14A23.5 23.5 0 1 1 3 30" />
              <path d="M3 4v13h13" />
              <path d="M26 13v15h10" />
            </svg>
            超级复盘
            <svg viewBox="0 0 18 32" className="h-8 w-[18px]" fill="none" stroke="currentColor" strokeWidth="3.5" aria-hidden="true"><path d="M2 2l13 14L2 30" /></svg>
          </a>
        </div>
        <dl className="flex gap-[43px] text-[40px] leading-[72px] whitespace-nowrap">
          <Fact label="价格" value="4.40" up />
          <Fact label="涨幅" value="3.04%" up />
          <Fact label="均价" value="4.34" up />
          <Fact label="金额" value="498.8万" />
        </dl>
      </div>
      <div className="relative mx-[13px]">
        <IntradayChart />
        <div className="flex h-[65px] items-center gap-[42px] pl-1 text-[37px] whitespace-nowrap text-[#2b2b2b]">
          <div className="flex items-center gap-1">
            <Picker label="分时指标" value="成交量" box="w-[136px] text-[32px]" />
            <span>37.85万</span>
          </div>
          <Reading style="gap-2.5 text-[#2b2b2b]" text="分时量:11371" />
        </div>
        <MinuteVolumeChart />
        <div className="pointer-events-none absolute inset-y-0 left-[43.1%] w-0.5 bg-[#777]/80" />
        <div className="relative flex h-16 items-center justify-between text-[41px] leading-none text-[#999]">
          <span>09:30</span>
          <span className="absolute left-[43.2%] flex h-[54px] w-[130px] -translate-x-1/2 items-center justify-center rounded-lg border border-[#e6e7ea] bg-[#f6f7fa] text-[#666]">11:13</span>
          <span>15:00</span>
        </div>
      </div>
      <div className="h-0.5 bg-[#d9dbe0]" />
    </section>
  );
}

export default function App() {
  return (
    <main className="w-full overflow-hidden bg-[#fefefe] font-['Noto_Sans_CJK_SC',sans-serif] font-[350]">
      <Header />
      <Quote />
      <Tabs />
      <Averages />
      <DayCharts />
      <Intraday />
    </main>
  );
}
